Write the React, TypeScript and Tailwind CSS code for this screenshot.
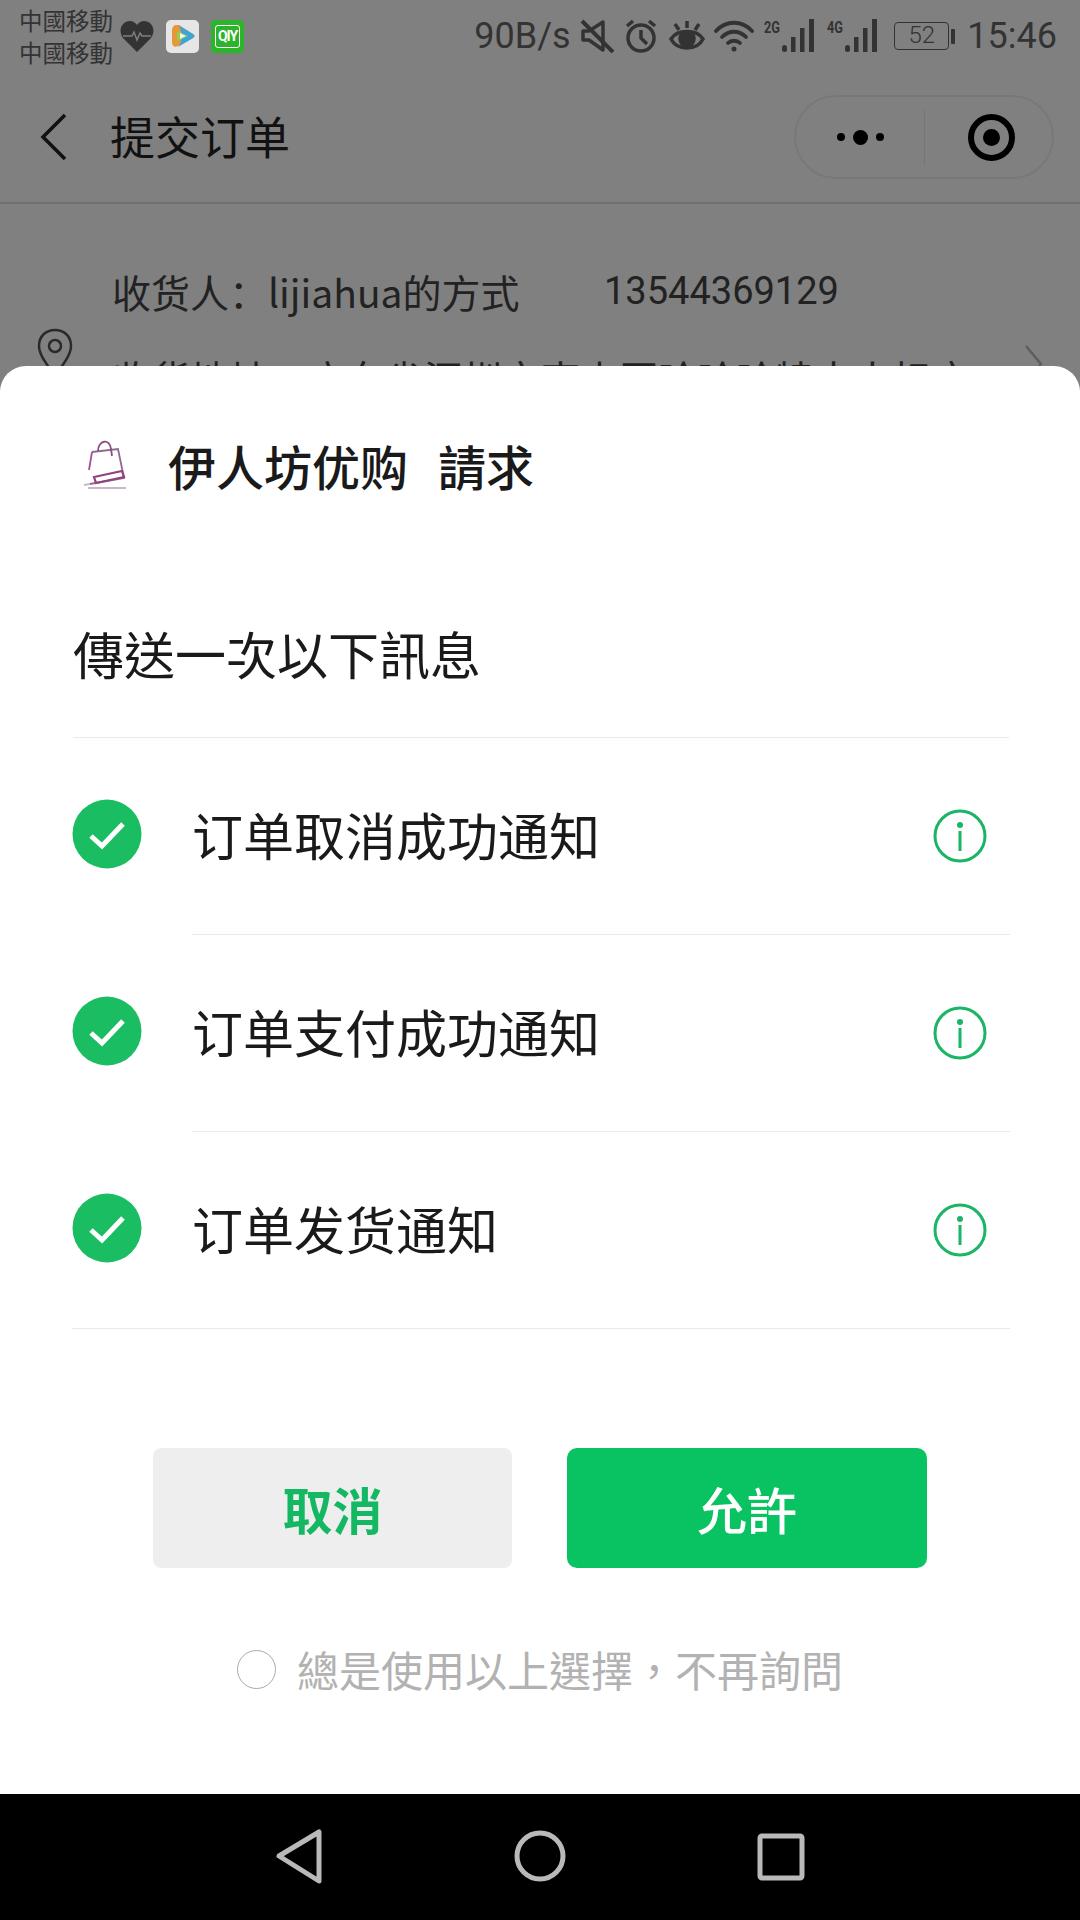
import React from "react";

const sc = "font-['Noto_Sans_CJK_SC','Noto_Sans',sans-serif]";
const tc = "font-['Noto_Sans_CJK_TC','Noto_Sans',sans-serif]";

function Signal({ label }: { label: string }) {
  return (
    <svg width="52" height="36" viewBox="0 0 52 36" className="block overflow-visible">
      <text x="0" y="15" fontSize="17" fontWeight="700" fontFamily="Roboto, sans-serif" fill="#333" textLength="16" lengthAdjust="spacingAndGlyphs">{label}</text>
      <rect x="18" y="27" width="5" height="7" rx="2.500" fill="#333" />
      <rect x="27" y="19" width="4.500" height="15" fill="#333" />
      <rect x="36" y="10" width="4.500" height="24" fill="#333" />
      <rect x="45" y="1" width="5" height="33" fill="#333" />
    </svg>
  );
}

function StatusBar() {
  return (
    <div className="h-[72px] flex items-center text-[#333333] relative">
      <div className={`ml-[19px] w-[96px] text-[23.500px] leading-[32px] ${tc}`}>
        <div>中國移動</div>
        <div>中國移動</div>
      </div>
      <svg width="34" height="32" viewBox="0 0 34 32" className="ml-[5px]">
        <path d="M17 32 L3 18 C-3 9 3 1 10 1 C13 1 15.500 3 17 5 C18.500 3 21 1 24 1 C31 1 37 9 31 18 Z" fill="#333" />
        <path d="M3 16 H12 L14 12 L17 20 L20 13 L22 16 H31" fill="none" stroke="#808080" strokeWidth="1.500" />
      </svg>
      <div className="ml-[12px] w-[33px] h-[33px] rounded-[5px] bg-[#e6e6e6] flex items-center justify-center">
        <svg width="28" height="28" viewBox="0 0 28 28">
          <path d="M7 3 C5 3 3 5 3 8 V20 C3 24 6 26 9 24 L24 16 C26 15 26 13 24 12 L10 3 Z" fill="#e5973a" />
          <path d="M9 3 L24 12 C26 13 26 15 24 16 L9 25 C14 20 14 8 9 3 Z" fill="#3aa6d8" />
          <path d="M8 9 L19 14 L8 19 Z" fill="#8fce5a" />
          <path d="M11 11 L17 14 L11 17 Z" fill="#f4f4e4" />
        </svg>
      </div>
      <div className="ml-[12px] w-[33px] h-[33px] rounded-[4px] bg-[#2cb42c] flex items-center justify-center">
        <div className="w-[25px] h-[23px] border-[1.500px] border-white rounded-[3px] text-white text-[14px] leading-[20px] font-bold text-center font-['Roboto',sans-serif] tracking-[-1px]">QIY</div>
      </div>

      <div className="ml-auto mr-[23px] flex items-center">
        <span className="text-[36px] leading-[40px] font-['Roboto',sans-serif] w-[94px]">90B/s</span>
        <svg width="34" height="34" viewBox="0 0 34 34" className="ml-[12px]" fill="none" stroke="#333" strokeWidth="3.500">
          <path d="M3 12 V21 H9 L23 31 V3 L9 12 Z" strokeLinejoin="round" />
          <path d="M2 2 L33 33" strokeWidth="4" />
        </svg>
        <svg width="34" height="34" viewBox="0 0 34 34" className="ml-[10px]" fill="none" stroke="#333" strokeWidth="3.500">
          <circle cx="17" cy="19" r="13" />
          <path d="M17 11 V19 L23 25" />
          <path d="M3 7 L9 2 M25 2 L31 7" />
        </svg>
        <svg width="36" height="30" viewBox="0 0 36 30" className="ml-[11px]" fill="none" stroke="#333" strokeWidth="3.500">
          <path d="M2 18 C8 8 28 8 34 18 C28 30 8 30 2 18 Z" />
          <circle cx="18" cy="18" r="7" fill="#333" />
          <path d="M6 3 L10 9 M18 0 V7 M30 3 L26 9" />
        </svg>
        <svg width="40" height="32" viewBox="0 0 40 32" className="ml-[9px]" fill="none" stroke="#333" strokeWidth="3.800" strokeLinecap="round">
          <path d="M2 11 C12 0 28 0 38 11" />
          <path d="M8 17 C15 10 25 10 32 17" />
          <path d="M14 23 C17 20 23 20 26 23" />
          <circle cx="20" cy="29" r="2.500" fill="#333" stroke="none" />
        </svg>
        <div className="ml-[10px]"><Signal label="2G" /></div>
        <div className="ml-[11px]"><Signal label="4G" /></div>
        <div className="ml-[15px] flex items-center">
          <div className="w-[55px] h-[28px] border-[1.500px] border-[#333333] rounded-[4px] text-[24px] leading-[25px] text-center font-['Roboto',sans-serif] font-light">52</div>
          <div className="ml-[2px] w-[4px] h-[15px] bg-[#333333] rounded-[1px]" />
        </div>
        <span className="ml-[12px] text-[36px] leading-[40px] font-['Roboto',sans-serif]">15:46</span>
      </div>
    </div>
  );
}

function Header() {
  return (
    <div className="h-[132px] flex items-center border-b-[2px] border-[#707070] relative">
      <svg width="30" height="50" viewBox="0 0 30 50" className="ml-[39px]" fill="none" stroke="#111" strokeWidth="3.500">
        <path d="M26 3 L4 25 L26 47" />
      </svg>
      <div className={`ml-[41px] -mt-[2px] text-[45px] text-[#111111] leading-[50px] ${sc}`}>提交订单</div>
      <div className="ml-auto mr-[26px] w-[260px] h-[84px] rounded-full border-[2px] border-[#787878] flex items-center">
        <div className="w-[129px] h-[56px] flex items-center justify-center gap-[8px] border-r border-[#767676]">
          <span className="w-[8px] h-[8px] rounded-full bg-black" />
          <span className="w-[15px] h-[15px] rounded-full bg-black" />
          <span className="w-[8px] h-[8px] rounded-full bg-black" />
        </div>
        <div className="flex-1 flex justify-center pl-[6px]">
          <div className="w-[47px] h-[47px] rounded-full border-[6px] border-black flex items-center justify-center">
            <span className="w-[17px] h-[17px] rounded-full bg-black" />
          </div>
        </div>
      </div>
    </div>
  );
}

function Backdrop() {
  return (
    <div className="h-[390px] bg-[#808080] overflow-hidden shrink-0">
      <StatusBar />
      <Header />
      <div className={`relative pt-[59px] pl-[112px] text-[#222222] text-[39px] leading-[56px] ${sc}`}>
        <div className="flex">
          <span className="w-[492px]">收货人：lijiahua的方式</span>
          <span className="font-['Roboto',sans-serif] text-[38px]">13544369129</span>
        </div>
        <div className="mt-[30px] whitespace-nowrap">收货地址：广东省深圳市南山区哈哈哈犊大人标应</div>
        <svg width="36" height="50" viewBox="0 0 36 50" className="absolute left-[37px] top-[124px]" fill="none" stroke="#2a2a2a" strokeWidth="2.500">
          <path d="M18 48 C8 34 2 26 2 18 C2 8 9 2 18 2 C27 2 34 8 34 18 C34 26 28 34 18 48 Z" />
          <circle cx="18" cy="18" r="6" />
        </svg>
        <svg width="20" height="40" viewBox="0 0 20 40" className="absolute left-[1024px] top-[140px]" fill="none" stroke="#5e5e5e" strokeWidth="2.500">
          <path d="M2 2 L17 20 L2 38" />
        </svg>
      </div>
    </div>
  );
}

function Check() {
  return (
    <svg width="70" height="70" viewBox="0 0 70 70" className="shrink-0 block">
      <circle cx="35" cy="35" r="34.500" fill="#1bbd63" />
      <path d="M19 37 L30 47 L51 25" fill="none" stroke="#ffffff" strokeWidth="5" />
    </svg>
  );
}

function Info() {
  return (
    <svg width="54" height="54" viewBox="0 0 54 54" className="block">
      <circle cx="27" cy="27" r="25" fill="none" stroke="#1bb566" strokeWidth="3" />
      <circle cx="27" cy="16" r="3" fill="#1bb566" />
      <rect x="25.500" y="22" width="3" height="20" fill="#1bb566" />
    </svg>
  );
}

function Row({ label, line }: { label: string; line: string }) {
  return (
    <div className="h-[197px] relative flex items-center pl-[72px] pr-[93px]">
      <div className="-mt-[5px]"><Check /></div>
      <span className={`ml-[50px] -mt-[5px] text-[51px] leading-[60px] text-[#1a1a1a] ${sc}`}>{label}</span>
      <div className="ml-auto -mt-[1px]"><Info /></div>
      <div className={`absolute bottom-0 right-[70px] h-[1px] bg-[#e9e9e9] ${line}`} />
    </div>
  );
}

function Sheet() {
  return (
    <div className="relative -mt-[24px] flex-1 bg-white rounded-t-[26px] flex flex-col">
      <div className="h-[200px] flex items-center pl-[82px] shrink-0">
        <svg width="46" height="50" viewBox="0 0 46 50" fill="none" stroke="#8a4f82" strokeWidth="1.800" className="-mt-[2px]">
          <path d="M10 12 L36 9 L42 38 L8 44" stroke="#8f6a8c" />
          <path d="M10 12 L7 30" stroke="#a0529a" />
          <path d="M16 11 C16 0 28 -2 29 9 L30 16" />
          <path d="M12 37 L40 31 L42 37 L14 43 Z" stroke="#93417f" strokeWidth="2.200" />
          <path d="M2 45 L8 44 M6 48 H44" stroke="#c8b8c6" />
        </svg>
        <div className="ml-[40px] -mt-[3px] flex">
          <span className={`text-[48px] leading-[56px] font-medium text-[#1a1a1a] ${tc}`}>伊人坊优购</span>
          <span className={`ml-[30px] text-[48px] leading-[56px] font-medium text-[#1a1a1a] ${tc}`}>請求</span>
        </div>
      </div>
      <div className={`mx-[73px] w-[936px] h-[172px] shrink-0 border-b border-[#e9e9e9] flex items-center pt-[2px] text-[51px] leading-[60px] text-[#1a1a1a] ${tc}`}>
        傳送一次以下訊息
      </div>
      <Row label="订单取消成功通知" line="left-[192px]" />
      <Row label="订单支付成功通知" line="left-[192px]" />
      <Row label="订单发货通知" line="left-[72px]" />
      <div className="mt-[119px] flex justify-center gap-[55px]">
        <button className={`w-[359px] h-[120px] rounded-[8px] bg-[#eeeeee] text-[#15b862] text-[50px] font-bold ${sc}`}>取消</button>
        <button className={`w-[360px] h-[120px] rounded-[10px] bg-[#09c261] text-white text-[50px] font-medium ${tc}`}>允許</button>
      </div>
      <div className="mt-[78px] flex items-center pl-[237px]">
        <span className="w-[39px] h-[39px] rounded-full border-[1.500px] border-[#aaaaaa]" />
        <span className={`ml-[21px] text-[42px] leading-[46px] text-[#b2b2b2] ${tc}`}>總是使用以上選擇，不再詢問</span>
      </div>
    </div>
  );
}

function NavBar() {
  return (
    <div className="h-[126px] bg-black shrink-0 relative flex items-center justify-center">
      <svg width="1080" height="126" viewBox="0 0 1080 126" fill="none" stroke="#b9b9b9" strokeWidth="5" strokeLinejoin="round">
        <path d="M279 62 L319 38 V87 Z" />
        <circle cx="540" cy="62" r="23" />
        <rect x="760" y="42" width="42" height="42" rx="2" />
      </svg>
    </div>
  );
}

export default function App() {
  return (
    <div className="w-[1080px] h-[1920px] flex flex-col overflow-hidden bg-white">
      <Backdrop />
      <Sheet />
      <NavBar />
    </div>
  );
}
